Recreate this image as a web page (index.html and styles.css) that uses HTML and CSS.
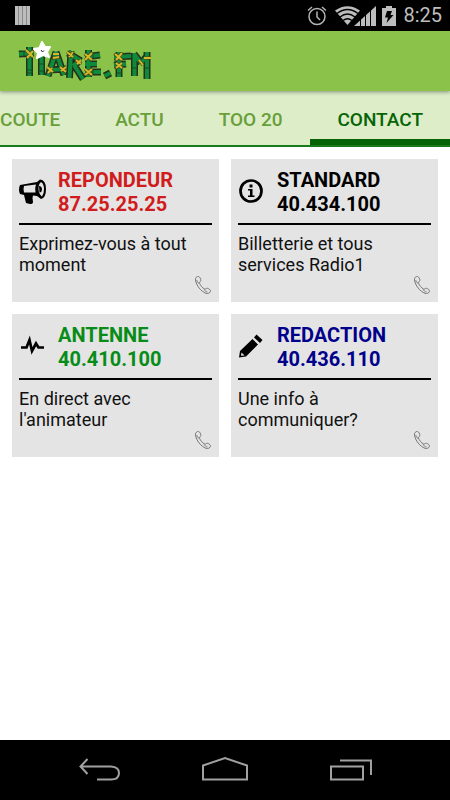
FILE: index.html
```html
<!DOCTYPE html>
<html lang="fr">
<head>
    <meta charset="UTF-8">
    <meta name="viewport" content="width=device-width, initial-scale=1.0">
    <title>Tiare FM - Contact</title>
    <link rel="stylesheet" href="styles.css">
</head>
<body>

    <!-- Shared icon shapes -->
    <svg class="symbols" aria-hidden="true">
        <symbol id="phone" viewBox="0 0 18 20">
            <path d="M1.5 5C1 3 3 1 4.500 1.500C6 2 7 4 6.800 5.500C6.600 6.800 5.200 7 5.500 8C6 10 8.500 13 10.500 14C11.600 14.500 12.200 13 13.500 13.300C15 13.700 16.700 15 16.500 16.200C16 18 14 19 12 18.300C7 16.500 2.300 10.500 1.500 5Z"/>
            <path d="M5 8.200C3.800 7.800 3 6.500 2.800 5.200M10.200 14.300C10.800 15.700 12 16.800 13.500 17"/>
        </symbol>
    </svg>

    <div class="status-bar">
        <svg class="bars" width="15" height="19" viewBox="0 0 15 19">
            <path d="M0 0H15V19H0Z" fill="#8a8a8a"/>
            <path d="M0 0H3V19H0ZM4 0H7V19H4ZM8 0H11V19H8ZM12 0H15V19H12Z" fill="#bdbdbd"/>
        </svg>
        <svg width="20" height="20" viewBox="0 0 20 20" fill="none" stroke="#b5b5b5" stroke-width="1.500">
            <circle cx="10" cy="10.500" r="8"/>
            <path d="M10 5.500V11L13 14M1 4.500L5 1M19 4.500L15 1"/>
        </svg>
        <svg class="signal" width="42" height="20" viewBox="0 0 42 20">
            <path d="M12.500 19L0 4.500Q12.500-4 25 4.500Z" fill="#bdbdbd"/>
            <path d="M2 7.500Q12.500-.5 23 7.500M5 11Q12.500 5 20 11M8 14.500Q12.500 11 17 14.500" fill="none" stroke="#000" stroke-width="1.300"/>
            <path d="M19 20L41 0V20Z" fill="#bdbdbd"/>
            <path d="M25.500 12V20M30.500 8V20M35.500 4V20" stroke="#000" stroke-width="1"/>
        </svg>
        <svg class="battery" width="14" height="20" viewBox="0 0 14 20">
            <path d="M4 0H10V2H14V20H0V2H4Z" fill="#bdbdbd"/>
            <path d="M5 5H10L8.500 9H11.500L4.500 17L6 11.500H3Z" fill="#000"/>
        </svg>
        <span class="clock">8:25</span>
    </div>

    <header class="app-bar">
        <svg class="logo" width="136" height="42" viewBox="17 40 136 42" role="img" aria-label="Tiare.FM">
            <!-- bamboo canes: dark edge, then the green body -->
            <g class="cane-edge">
                <path id="cane-lines" d="M19 54L34 53M29.500 47V76M41.500 56V75M56 52L48 76M56 52L64 75M48 70L66 69M71 51L69.500 78M68 53L81 61M80 61L73 66M74 65L83 79M88.500 50V77M85 57L100 55M85 64H97M85 72H101M104.500 76L110.500 73M119 52V77M114 57L131 56M114 65L126 64M134.500 53V76M134 54L141 63M141 63L148 55M147 52V79"/>
            </g>
            <use href="#cane-lines" class="cane"/>
            <path class="knots" d="M27 70H32M27 73H32M39 64H44M39 71H44M117 73H122M132 68H137M145 68H150M93 54V58M93 70V74M24 51V56"/>
            <!-- rope lashings -->
            <path class="rope-edge" d="M26 50L33 57M33 51L27 58M52 58L60 57M47 67L53 72M52 68L48 73M60 67L66 72M66 67L61 71M67 52L73 57M73 52L69 57M76 60L81 64M81 60L77 64M85 54L92 60M92 53L85 60M85 69L92 75M92 69L85 75M115 54L122 60M122 53L116 60M116 63L122 68M122 63L116 68M139 60L143 65M144 58L151 58"/>
            <path class="rope" d="M26 50L33 57M33 51L27 58M53 58L59 57M53 54L59 54M47 67L53 72M52 68L48 73M60 67L66 72M66 67L61 71M67 52L73 57M73 52L69 57M76 60L81 64M81 60L77 64M85 54L92 60M92 53L85 60M85 69L92 75M92 69L85 75M115 54L122 60M122 53L116 60M116 63L122 68M122 63L116 68M139 60L143 65M144 58L151 58"/>
            <!-- tiare flower -->
            <path class="flower" d="M42 42L45 47L50 47L47 52L49 57L43 55L37 58L38 53L34 49L39.500 48Z"/>
            <path d="M41 50L42.500 52L44 50.500" fill="none" stroke="#222" stroke-width="1"/>
        </svg>
    </header>

    <nav class="tabs">
        <a class="tab" href="#ecoute">COUTE</a>
        <a class="tab" href="#actu">ACTU</a>
        <a class="tab" href="#too20">TOO 20</a>
        <a class="tab active" href="#contact">CONTACT</a>
    </nav>

    <main class="cards">
        <a class="card" href="tel:87252525">
            <div class="card-head red">
                <svg class="card-icon" width="28" height="28" viewBox="0 0 28 28">
                    <path d="M1 7L18 4L21 1.500Q27 2 27 11Q27 20 22 21L18 18L14 17.500L13.500 20L14 24Q14 26 11 26L7 25L5 17L1 16Q-1 11.500 1 7Z"/>
                    <path d="M5 8L17 6.500Q15.500 10 16.500 14.500L5 14.500Q4 11 5 8Z" fill="#e4e4e4"/>
                    <path d="M22 4Q25 6 25 11Q25 16 23 18.500Q19.500 16 19.500 10.500Q19.500 6 22 4Z" fill="#e4e4e4"/>
                    <path d="M20 8Q23 8 23 11.500Q23 14 20.500 14.500Z"/>
                </svg>
                <h2>REPONDEUR<br>87.25.25.25</h2>
            </div>
            <p>Exprimez-vous à tout moment</p>
            <svg class="phone"><use href="#phone"/></svg>
        </a>

        <a class="card" href="tel:40434100">
            <div class="card-head black">
                <svg class="card-icon" width="28" height="28" viewBox="0 0 28 28">
                    <circle cx="13" cy="13" r="10.500" fill="none" stroke="#000" stroke-width="2.700"/>
                    <path d="M11.500 6.500H14.500V9.500H11.500ZM10 11H14.500V17.500H16.500V19H10V17.500H12V12.500H10Z"/>
                </svg>
                <h2>STANDARD<br>40.434.100</h2>
            </div>
            <p>Billetterie et tous services Radio1</p>
            <svg class="phone"><use href="#phone"/></svg>
        </a>

        <a class="card" href="tel:40410100">
            <div class="card-head green">
                <svg class="card-icon" width="28" height="28" viewBox="0 0 28 28">
                    <path d="M2 14.500H7.500L10.500 7L13 18L17 10.500L19.500 14.500H25" fill="none" stroke="#000" stroke-width="2.700"/>
                </svg>
                <h2>ANTENNE<br>40.410.100</h2>
            </div>
            <p>En direct avec l'animateur</p>
            <svg class="phone"><use href="#phone"/></svg>
        </a>

        <a class="card" href="tel:40436110">
            <div class="card-head blue">
                <svg class="card-icon" width="28" height="28" viewBox="0 0 28 28">
                    <path d="M1 24.500L2 18L14.500 6L20 11.500L8 23.500ZM16 4.500L18.500 1.500L24.500 7L22 10Z"/>
                    <path d="M3.500 19.500L6.500 22.500L3 22.800Z" fill="#e4e4e4"/>
                </svg>
                <h2>REDACTION<br>40.436.110</h2>
            </div>
            <p>Une info à communiquer?</p>
            <svg class="phone"><use href="#phone"/></svg>
        </a>
    </main>

    <footer class="nav-bar">
        <button type="button" aria-label="Retour">
            <svg width="46" height="28" viewBox="0 0 46 28">
                <path d="M11.500 3L4.500 10.500L11.500 18M5 10.500H35Q43 11 43 17Q43 23.500 35 23.500H21"/>
            </svg>
        </button>
        <button type="button" aria-label="Accueil">
            <svg width="46" height="28" viewBox="0 0 46 28">
                <path d="M1 23.500V9.500L23 2L45 9.500V23.500Z"/>
            </svg>
        </button>
        <button type="button" aria-label="Applications">
            <svg width="46" height="28" viewBox="0 0 46 28">
                <path d="M3 10.500H35V23.500H3ZM12 4.500H43V19"/>
            </svg>
        </button>
    </footer>

</body>
</html>
```

FILE: styles.css
```css
* {
    box-sizing: border-box;
}
body {
    margin: 0;
    min-height: 100vh;
    display: flex;
    flex-direction: column;
    font-family: Roboto, "Noto Sans", sans-serif;
    background: #fff;
}
svg {
    display: block;
    flex: none;
}
.symbols {
    position: absolute;
    width: 0;
    height: 0;
}

/* Status bar */
.status-bar {
    display: flex;
    align-items: center;
    height: 31px;
    padding: 0 8px 0 15px;
    background: #000;
    color: #bdbdbd;
}
.bars {
    margin-right: auto;
}
.signal {
    margin-left: 8px;
}
.battery {
    margin: 0 7px 0 5px;
}
.clock {
    font-size: 20px;
    line-height: 31px;
}

/* App bar */
.app-bar {
    position: relative;
    display: flex;
    align-items: center;
    height: 60px;
    padding: 0 17px;
    background: #8bc34a;
    box-shadow: 0 1px 4px rgba(0, 0, 0, 0.4);
}
.cane-edge {
    fill: none;
    stroke: #26301c;
    stroke-width: 7px;
}
.cane {
    fill: none;
    stroke: #0d8a3c;
    stroke-width: 4px;
}
.knots {
    fill: none;
    stroke: #174d22;
    stroke-width: 1px;
}
.rope-edge {
    stroke: #4d4517;
    stroke-width: 3px;
}
.rope {
    stroke: #d4b82a;
    stroke-width: 2px;
}
.flower {
    fill: #fff;
    stroke: #fff;
    stroke-width: 2px;
    stroke-linejoin: round;
}

/* Tabs */
.tabs {
    display: flex;
    justify-content: space-between;
    height: 56px;
    overflow: hidden;
    background: #dcedc8;
    border-bottom: 2px solid #187a18;
}
.tab {
    flex: none;
    height: 56px;
    padding: 0 27px;
    font-size: 19px;
    font-weight: 500;
    line-height: 57px;
    color: #689f38;
    text-decoration: none;
}
.tab:first-child {
    padding-left: 0;
}
.tab.active {
    color: #066406;
    box-shadow: inset 0 -8px #066406;
}

/* Contact cards */
.cards {
    flex: 1;
    display: grid;
    grid-template-columns: 1fr 1fr;
    align-content: start;
    gap: 12px;
    padding: 12px;
}
.card {
    display: flex;
    flex-direction: column;
    padding: 9px 7px 7px;
    background: #e4e4e4;
    color: #111;
    text-decoration: none;
}
.card-head {
    display: flex;
    align-items: center;
    gap: 11px;
    padding-bottom: 7px;
    border-bottom: 2px solid #000;
}
.card h2 {
    margin: 0;
    font-size: 20px;
    font-weight: 700;
    line-height: 24px;
}
.card p {
    margin: 8px 0 0;
    font-size: 18px;
    line-height: 21px;
}
.red {
    color: #d01c1c;
}
.black {
    color: #000;
}
.green {
    color: #078c18;
}
.blue {
    color: #00008b;
}
.phone {
    width: 18px;
    height: 20px;
    align-self: flex-end;
    fill: none;
    stroke: #777;
    stroke-width: 1px;
}

/* Navigation bar */
.nav-bar {
    display: flex;
    justify-content: center;
    gap: 80px;
    height: 60px;
    background: #000;
}
.nav-bar button {
    display: flex;
    align-items: center;
    padding: 0;
    border: none;
    background: none;
}
.nav-bar path {
    fill: none;
    stroke: #a0a0a0;
    stroke-width: 2px;
}
```
